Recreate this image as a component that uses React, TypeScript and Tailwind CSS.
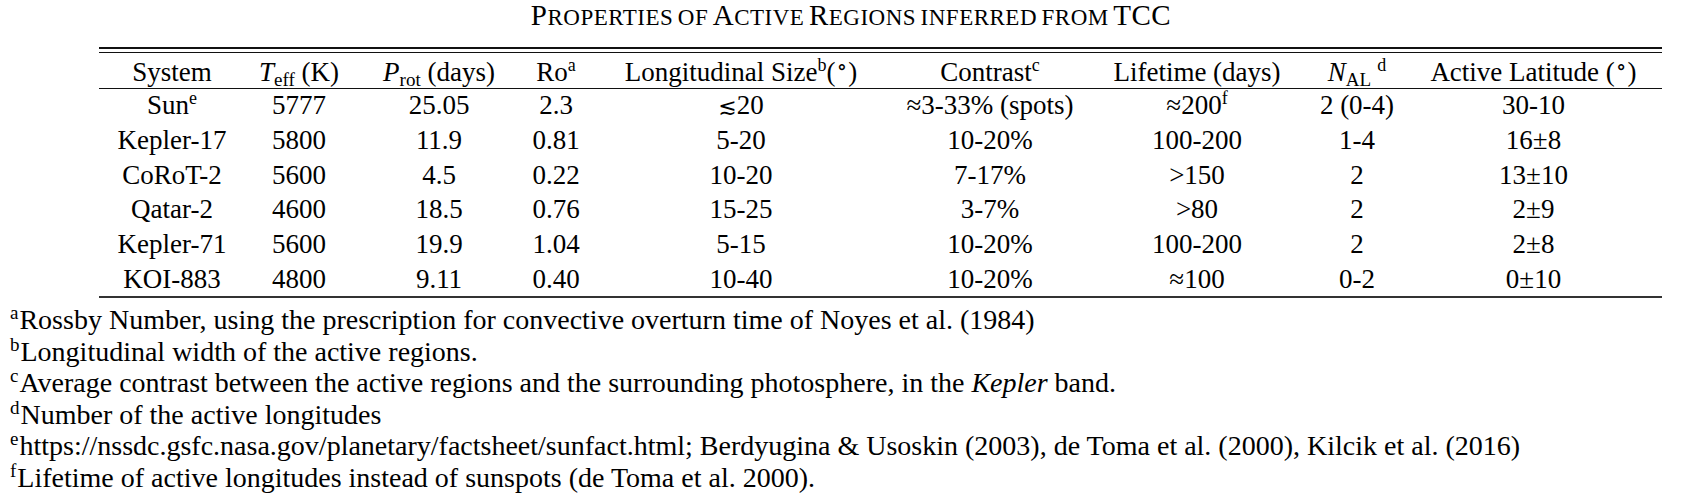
import type { ReactNode } from "react";

const grid =
  "grid grid-cols-[146px_108px_172px_62px_308px_190px_224px_96px_257px] text-center";

function Sup({ children }: { children: ReactNode }) {
  return <span className="text-[18px] leading-none align-[10px]">{children}</span>;
}

function Sub({ children }: { children: ReactNode }) {
  return <span className="text-[19px] leading-none align-[-5px]">{children}</span>;
}

function Deg() {
  return (
    <span className="text-[22px] leading-none align-[7px] px-px font-['DejaVu_Serif',serif]">∘</span>
  );
}

const header: ReactNode[] = [
  "System",
  <>
    <i>T</i>
    <Sub>eff</Sub> (K)
  </>,
  <>
    <i>P</i>
    <Sub>rot</Sub> (days)
  </>,
  <>
    Ro<Sup>a</Sup>
  </>,
  <>
    Longitudinal Size<Sup>b</Sup>(<Deg />)
  </>,
  <>
    Contrast<Sup>c</Sup>
  </>,
  "Lifetime (days)",
  <>
    <i>N</i>
    <Sub>AL</Sub>
    <span className="pl-[6px]" />
    <Sup>d</Sup>
  </>,
  <>
    Active Latitude (<Deg />)
  </>,
];

const rows: ReactNode[][] = [
  [
    <>
      Sun<Sup>e</Sup>
    </>,
    "5777",
    "25.05",
    "2.3",
    <>
      <span className="font-['DejaVu_Sans',sans-serif] text-[22px]">≲</span>20
    </>,
    "≈3-33% (spots)",
    <>
      ≈200<Sup>f</Sup>
    </>,
    "2 (0-4)",
    "30-10",
  ],
  ["Kepler-17", "5800", "11.9", "0.81", "5-20", "10-20%", "100-200", "1-4", "16±8"],
  ["CoRoT-2", "5600", "4.5", "0.22", "10-20", "7-17%", ">150", "2", "13±10"],
  ["Qatar-2", "4600", "18.5", "0.76", "15-25", "3-7%", ">80", "2", "2±9"],
  ["Kepler-71", "5600", "19.9", "1.04", "5-15", "10-20%", "100-200", "2", "2±8"],
  ["KOI-883", "4800", "9.11", "0.40", "10-40", "10-20%", "≈100", "0-2", "0±10"],
];

const notes: [string, ReactNode][] = [
  ["a", "Rossby Number, using the prescription for convective overturn time of Noyes et al. (1984)"],
  ["b", "Longitudinal width of the active regions."],
  [
    "c",
    <>
      Average contrast between the active regions and the surrounding photosphere, in the <i>Kepler</i> band.
    </>,
  ],
  ["d", "Number of the active longitudes"],
  [
    "e",
    "https://nssdc.gsfc.nasa.gov/planetary/factsheet/sunfact.html; Berdyugina & Usoskin (2003), de Toma et al. (2000), Kilcik et al. (2016)",
  ],
  ["f", "Lifetime of active longitudes instead of sunspots (de Toma et al. 2000)."],
];

// small caps built by hand: first letter big, rest smaller upper case
function Caps({ text }: { text: string }) {
  return (
    <>
      {text.split(" ").map((w, i) => {
        const big = w === "TCC" ? w : /^[PAR]/.test(w) && i !== 4 && i !== 5 ? w[0] : "";
        const rest = w.slice(big.length);
        return (
          <span key={i}>
            {i > 0 && " "}
            <span className="text-[29px]">{big}</span>
            <span className="text-[23px]">{rest}</span>
          </span>
        );
      })}
    </>
  );
}

export default function App() {
  return (
    <div className="w-[1702px] h-[500px] bg-white text-black font-['Liberation_Serif',serif] overflow-hidden">
      <div className="h-[47px] text-center leading-[30px] tracking-[0.5px]">
        <Caps text="PROPERTIES OF ACTIVE REGIONS INFERRED FROM TCC" />
      </div>

      <div className="ml-[99px] w-[1563px] text-[27px]">
        <div className="h-[1.5px] bg-[#111]" />
        <div className="h-[3px]" />
        <div className="h-[1.5px] bg-[#111]" />

        <div className={`${grid} h-[35px] pt-[2px] leading-[34px] whitespace-nowrap`}>
          {header.map((h, i) => (
            <div key={i}>{h}</div>
          ))}
        </div>
        <div className="h-[1.2px] bg-[#111]" />

        <div className="-mt-[1px]">
          {rows.map((r, i) => (
            <div key={i} className={`${grid} h-[34.7px] leading-[34.7px] whitespace-nowrap`}>
              {r.map((c, j) => (
                <div key={j}>{c}</div>
              ))}
            </div>
          ))}
        </div>
        <div className="h-[2px] bg-[#333]" />
      </div>

      <div className="pt-[5px] pl-[10px] text-[28px] leading-[28.5px] whitespace-nowrap">
        {notes.map(([k, t]) => (
          <div key={k}>
            <span className="text-[19px] leading-none align-[10px] pr-px">{k}</span>
            {t}
          </div>
        ))}
      </div>
    </div>
  );
}
